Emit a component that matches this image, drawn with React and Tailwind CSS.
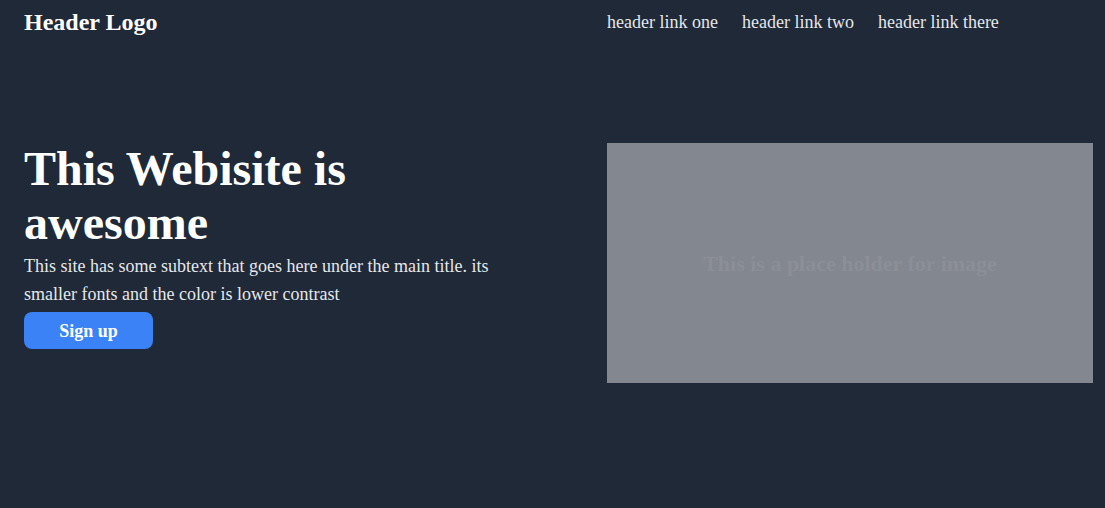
export default function App() {
  const links = ["header link one", "header link two", "header link there"];

  return (
    <div className="min-h-screen bg-[#1f2937] font-['Liberation_Serif','Times_New_Roman',serif] text-white">
      <header className="flex items-center h-[44px] px-6">
        <div className="w-[583px] text-2xl font-bold">Header Logo</div>
        <nav className="flex gap-6 text-lg text-gray-200">
          {links.map((l) => (
            <a key={l} href="#">{l}</a>
          ))}
        </nav>
      </header>

      <main className="flex items-start pl-6 pr-3 pt-[98px]">
        <div className="w-[583px]">
          <h1 className="text-5xl font-bold leading-[54px] w-[400px]">This Webisite is awesome</h1>
          <p className="mt-[2px] text-lg leading-7 text-gray-200 w-[480px]">
            This site has some subtext that goes here under the main title. its smaller fonts and the color is lower contrast
          </p>
          <button className="mt-1 w-[129px] h-[37px] rounded-lg bg-[#3b82f6] text-lg font-bold text-white">
            Sign up
          </button>
        </div>
        <div className="mt-px flex items-center justify-center w-[486px] h-[240px] bg-[#838790]">
          <span className="text-[22px] font-bold text-[#8b8f97]">This is a place holder for image</span>
        </div>
      </main>
    </div>
  );
}
